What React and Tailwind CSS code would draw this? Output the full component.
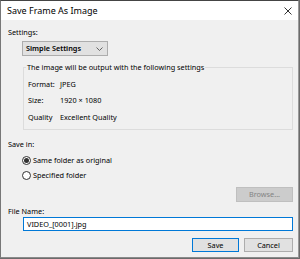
import React from "react";

const font = { fontFamily: '"Noto Sans", "Open Sans", Arial, sans-serif' };

function Radio({ checked, label }) {
  return (
    <label className="flex items-center h-[12px] ml-[14px] gap-[2px]">
      <span className="w-[9px] h-[9px] rounded-full border border-[#333333] bg-white flex items-center justify-center">
        {checked && <span className="w-[5px] h-[5px] rounded-full bg-[#333333]" />}
      </span>
      <span>{label}</span>
    </label>
  );
}

function InfoRow({ name, value }) {
  return (
    <div className="flex h-[16.5px] items-center">
      <span className="w-[32px]">{name}</span>
      <span>{value}</span>
    </div>
  );
}

export default function App() {
  return (
    <div className="w-[300px] h-[259px] bg-[#6b6b6b]">
      <div
        className="w-[299px] h-[258px] border-t border-l border-r border-b border-t-[#444444] border-l-[#777777] border-r-[#9a9a9a] border-b-[#8a8a8a] bg-[#f0f0f0] flex flex-col text-[7.3px] leading-[11px] text-black"
        style={font}
      >
        {/* Title bar */}
        <div className="h-[19px] bg-white flex items-center justify-between pl-[6px] pr-[5px] shrink-0">
          <span className="text-[9px]">Save Frame As Image</span>
          <svg width="8" height="8" viewBox="0 0 8 8" className="mr-[1px]">
            <path d="M0.5 0.5 L7.5 7.5 M7.5 0.5 L0.5 7.5" stroke="#333" strokeWidth="1" />
          </svg>
        </div>

        {/* Body */}
        <div className="flex flex-col pl-[7px] pr-[5px]">
          <div className="mt-[7px]">Settings:</div>
          <div className="mt-[3px] ml-[14px] w-[86px] h-[15px] bg-[#e1e1e1] border border-[#adadad] flex items-center justify-between pl-[3px] pr-[4px]">
            <span className="font-semibold">Simple Settings</span>
            <svg width="7" height="4" viewBox="0 0 7 4">
              <path d="M0.5 0.5 L3.5 3.5 L6.5 0.5" fill="none" stroke="#555" strokeWidth="0.9" />
            </svg>
          </div>

          <fieldset className="mt-[6px] ml-[15px] border border-[#dcdcdc] h-[68px] pl-[4px] pt-[3px]">
            <legend className="ml-[-2px] px-[1px]">The image will be output with the following settings</legend>
            <InfoRow name="Format:" value="JPEG" />
            <InfoRow name="Size:" value={"1920 \u00d7 1080"} />
            <InfoRow name="Quality" value="Excellent Quality" />
          </fieldset>

          <div className="mt-[9px]">Save in:</div>
          <div className="mt-[4px] flex flex-col gap-[3px]">
            <Radio checked label="Same folder as original" />
            <Radio label="Specified folder" />
          </div>

          <div className="flex justify-end mt-[6px]">
            <div className="w-[57px] h-[15px] bg-[#cccccc] border border-[#bfbfbf] text-[#838383] flex items-center justify-center">
              Browse...
            </div>
          </div>

          <div className="mt-[4px]">File Name:</div>
          <div className="mt-[0px] ml-[15px] h-[14px] bg-white border border-[#0078d7] flex items-center pl-[3px]">
            VIDEO_[0001].jpg
          </div>

          <div className="flex justify-end gap-[5px] mt-[7px]">
            <div className="w-[47px] h-[14px] bg-[#e1e1e1] border border-[#0078d7] flex items-center justify-center">
              Save
            </div>
            <div className="w-[49px] h-[14px] bg-[#e1e1e1] border border-[#adadad] flex items-center justify-center">
              Cancel
            </div>
          </div>
        </div>
      </div>
    </div>
  );
}
